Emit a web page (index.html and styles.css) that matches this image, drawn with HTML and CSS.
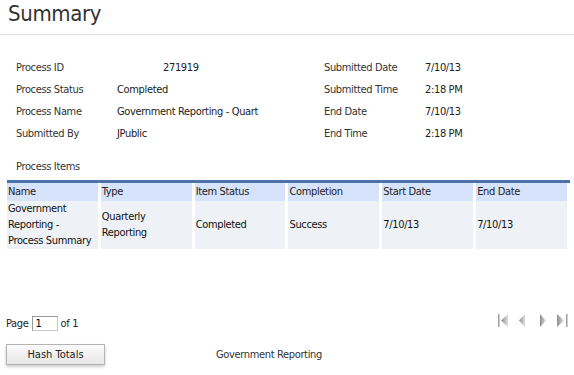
FILE: index.html
```html
<!DOCTYPE html>
<html lang="en">
<head>
  <meta charset="UTF-8">
  <title>Summary</title>
  <link rel="stylesheet" href="styles.css">
</head>
<body>
  <div class="title">Summary</div>

  <div class="info">
    <span class="lbl">Process ID</span><span class="val val-id">271919</span>
    <span class="lbl">Submitted Date</span><span class="val">7/10/13</span>
    <span class="lbl">Process Status</span><span class="val">Completed</span>
    <span class="lbl">Submitted Time</span><span class="val">2:18 PM</span>
    <span class="lbl">Process Name</span><span class="val">Government Reporting - Quart</span>
    <span class="lbl">End Date</span><span class="val">7/10/13</span>
    <span class="lbl">Submitted By</span><span class="val">JPublic</span>
    <span class="lbl">End Time</span><span class="val">2:18 PM</span>
  </div>

  <div class="section">Process Items</div>

  <div class="grid">
    <table>
      <thead>
        <tr>
          <th>Name</th>
          <th>Type</th>
          <th>Item Status</th>
          <th>Completion</th>
          <th>Start Date</th>
          <th>End Date</th>
        </tr>
      </thead>
      <tbody>
        <tr>
          <td>Government Reporting - Process Summary</td>
          <td>Quarterly Reporting</td>
          <td>Completed</td>
          <td>Success</td>
          <td>7/10/13</td>
          <td>7/10/13</td>
        </tr>
      </tbody>
    </table>
  </div>

  <div class="pager">
    <div class="page-no">Page <input class="page-input" type="text" value="1"> of 1</div>
    <div class="nav">
      <svg class="nav-first" width="11" height="13" viewBox="0 0 11 13">
        <defs>
          <linearGradient id="g" x1="0" y1="0" x2="1" y2="0">
            <stop offset="0" stop-color="#8c8c8c"/>
            <stop offset="1" stop-color="#e0e0e0"/>
          </linearGradient>
        </defs>
        <rect x="0" y="0" width="2" height="13" fill="url(#g)"/>
        <polygon points="10,0 3,6.5 10,13" fill="url(#g)"/>
      </svg>
      <svg class="nav-prev" width="7" height="13" viewBox="0 0 7 13">
        <polygon points="6,0 0,6.5 6,13" fill="url(#g)"/>
      </svg>
      <svg class="nav-next" width="7" height="13" viewBox="0 0 7 13">
        <polygon points="0,0 6,6.5 0,13" fill="url(#g)"/>
      </svg>
      <svg class="nav-last" width="11" height="13" viewBox="0 0 11 13">
        <polygon points="0,0 7,6.5 0,13" fill="url(#g)"/>
        <rect x="9" y="0" width="2" height="13" fill="url(#g)"/>
      </svg>
    </div>
  </div>

  <div class="footer">
    <button class="btn">Hash Totals</button>
    <span class="footer-name">Government Reporting</span>
  </div>
</body>
</html>
```

FILE: styles.css
```css
body {
  margin: 0;
  background: #fff;
  color: #222;
  font-family: "DejaVu Sans Condensed", "DejaVu Sans", sans-serif;
  font-size: 11px;
  letter-spacing: -0.35px;
  width: 574px;
  height: 375px;
  overflow: hidden;
}

.title {
  font-size: 22px;
  color: #333;
  padding: 1px 0 0 8px;
  height: 33px;
  border-bottom: 1px solid #dcdcdc;
}

.info {
  display: grid;
  grid-template-columns: 101px 207px 101px auto;
  row-gap: 8px;
  padding: 26px 0 0 16px;
  line-height: 14px;
}

.lbl {
  color: #333;
}

.val-id {
  padding-left: 46px;
}

.section {
  padding: 19px 0 0 16px;
  height: 14px;
  line-height: 14px;
  color: #333;
}

.grid {
  margin: 6px 4px 0 7px;
  border-top: 3px solid #4a72a8;
}

table {
  width: 563px;
  table-layout: fixed;
  border-collapse: separate;
  border-spacing: 0;
  font-size: 11px;
}

th, td {
  padding: 0 3px 0 1px;
  text-align: left;
  font-weight: normal;
  border-right: 3px solid #fff;
}

th {
  background: #d7e3fb;
  height: 18px;
  line-height: 18px;
}

td {
  background: #eef1f6;
  height: 48px;
  line-height: 16px;
  color: #111;
}

.pager {
  display: flex;
  justify-content: space-between;
  align-items: center;
  padding: 67px 6px 0 6px;
}

.page-no {
  display: flex;
  align-items: center;
  gap: 3px;
}

.page-input {
  width: 26px;
  height: 15px;
  padding: 0 0 0 3px;
  box-sizing: border-box;
  border: 1px solid #c8c8c8;
  border-top-color: #999;
  border-left-color: #999;
  font: inherit;
  margin: 0;
}

.nav {
  display: flex;
  align-items: center;
  margin-top: -6px;
}

.nav-prev,
.nav-last {
  margin-left: 10px;
}

.nav-next {
  margin-left: 14px;
}

.footer {
  display: flex;
  align-items: center;
  padding: 13px 0 0 6px;
}

.btn {
  width: 99px;
  height: 21px;
  font: inherit;
  color: #222;
  border: 1px solid #b4b4b4;
  background: linear-gradient(#fbfbfb, #e6e6e6);
  box-shadow: 0 2px 3px rgba(0, 0, 0, 0.2);
  padding: 0;
  margin: 0;
}

.footer-name {
  margin-left: 111px;
  color: #333;
}
```
